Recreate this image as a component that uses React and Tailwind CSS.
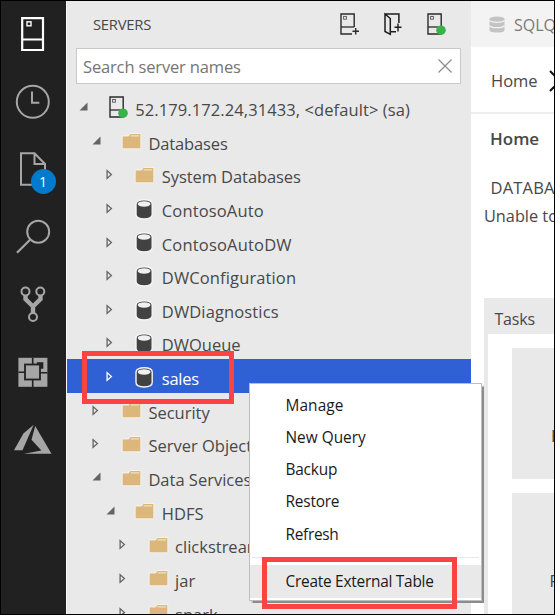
import React from "react";

const Svg = ({ w, h, className = "", children }) => (
  <svg width={w} height={h} viewBox={`0 0 ${w} ${h}`} fill="none" className={"block shrink-0 overflow-visible " + className}>{children}</svg>
);

function Twisty({ open, selected }) {
  return (
    <Svg w={10} h={12}>
      {open ? (
        <path d="M8.5 0.5V8.5H0.5Z" fill="#646464" />
      ) : (
        <path d="M1.1 1.6V9.4L5.4 5.5Z" stroke={selected ? "#fff" : "#646464"} strokeWidth="1.3" />
      )}
    </Svg>
  );
}

function Folder() {
  return (
    <Svg w={20} h={17}>
      <path d="M0.2 2.9H6.3L8.3 0.5H18.8V15.8H0.2Z" stroke="#f6f3ee" strokeWidth="1" />
      <path d="M0.7 3.4H6.5L8.5 1H18.3V15.3H0.7Z" fill="#dcb67a" />
      <path d="M8.6 2.9H17.2" stroke="#f6ead6" strokeWidth="1" />
    </Svg>
  );
}

function Cylinder() {
  return (
    <Svg w={20} h={21}>
      <path d="M1 5C1 2.2 4.6 0.8 9.1 0.8S17.2 2.2 17.2 5V15.6C17.2 18.6 13.6 20 9.1 20S1 18.6 1 15.6Z" fill="#424242" stroke="#f6f6f6" strokeWidth="1.4" />
      <ellipse cx="9.1" cy="5" rx="6.4" ry="2.7" fill="#f0eff1" />
    </Svg>
  );
}

function ServerBox({ dot, plus }) {
  return (
    <Svg w={20} h={23}>
      <path d={plus ? "M14.2 14V1H1V21H12" : "M1 1H14.2V21H1Z"} stroke="#2b2b2b" strokeWidth="1.4" />
      <path d="M1 14H14.2" stroke="#2b2b2b" strokeWidth="1.3" />
      <rect x="3.6" y="3.4" width="2.8" height="2.8" stroke="#555" strokeWidth="0.9" />
      {dot && <circle cx="14" cy="17.2" r="4.8" fill="#37b34a" />}
      {plus && <path d="M12.5 18.2H19M15.7 15V21.5" stroke="#2b2b2b" strokeWidth="1.4" />}
    </Svg>
  );
}

const rows = [
  { d: 0, k: "server", open: true, t: "52.179.172.24,31433, <default> (sa)", c: "tracking-[0.09px]" },
  { d: 1, k: "folder", open: true, t: "Databases", c: "tracking-[-0.12px]" },
  { d: 2, k: "folder", t: "System Databases", c: "tracking-[-0.08px]" },
  { d: 2, k: "db", t: "ContosoAuto", c: "tracking-[0.15px]" },
  { d: 2, k: "db", t: "ContosoAutoDW", c: "tracking-[0.18px]" },
  { d: 2, k: "db", t: "DWConfiguration", c: "tracking-[0.13px]" },
  { d: 2, k: "db", t: "DWDiagnostics", c: "tracking-[0.13px]" },
  { d: 2, k: "db", t: "DWQueue", c: "" },
  { d: 2, k: "db", t: "sales", c: "tracking-[-0.25px]", selected: true },
  { d: 1, k: "folder", t: "Security", c: "" },
  { d: 1, k: "folder", t: "Server Objects", c: "" },
  { d: 1, k: "folder", open: true, t: "Data Services", c: "" },
  { d: 2, k: "folder", open: true, t: "HDFS", c: "" },
  { d: 3, k: "folder", t: "clickstream", c: "" },
  { d: 3, k: "folder", t: "jar", c: "" },
  { d: 3, k: "folder", t: "spark", c: "" },
];
const indent = ["pl-[12px]", "pl-[25.4px]", "pl-[38.8px]", "pl-[52.1px]"];

function Row({ r }) {
  return (
    <div className={"flex h-[33.65px] shrink-0 items-start " + indent[r.d] + (r.selected ? " bg-[#2f61d5] text-white" : "")}>
      <span className="w-[29.7px] pt-[11.7px]"><Twisty open={r.open} selected={r.selected} /></span>
      <span className={r.k === "server" ? "w-[26.6px] pt-[6.2px]" : r.k === "db" ? "w-[26.3px] pt-[7.5px]" : "w-[26.3px] pt-[9.2px]"}>
        {r.k === "server" ? <ServerBox dot /> : r.k === "db" ? <Cylinder /> : <Folder />}
      </span>
      <span className={"pt-[7.7px] text-[16.5px] leading-6 whitespace-pre " + r.c}>{r.t}</span>
    </div>
  );
}

function ActivityBar() {
  const g = "#a6a6a6";
  return (
    <nav className="flex w-[65px] shrink-0 flex-col items-center bg-[#212121] pt-4 pr-[1.8px]">
      <Svg w={40} h={36}>
        <path d="M9.2 1.2H30V33H9.2ZM9.2 22.5H30" stroke="#fff" strokeWidth="2.2" />
        <rect x="14" y="4.8" width="4" height="4" stroke="#fff" strokeWidth="1.4" />
      </Svg>
      <Svg w={40} h={36} className="mt-8">
        <circle cx="19.8" cy="16.8" r="16" stroke={g} strokeWidth="2" />
        <path d="M19 6.5V17.7H26.3" stroke={g} strokeWidth="2" />
      </Svg>
      <div className="relative mt-8">
        <Svg w={40} h={36}>
          <path d="M8 0.2H21.5L32 11V31.7H8ZM21.5 0.2V11H32" stroke={g} strokeWidth="2" />
        </Svg>
        <span className="absolute top-[15.5px] left-[18px] flex h-[25px] w-[25px] items-center justify-center rounded-full bg-[#007acc] text-[14px] text-white">1</span>
      </div>
      <Svg w={40} h={36} className="mt-[27.5px]">
        <circle cx="25.2" cy="14.7" r="11" stroke={g} strokeWidth="2" />
        <path d="M17.3 22.5L4 35.7" stroke={g} strokeWidth="2.2" />
      </Svg>
      <Svg w={40} h={38} className="mt-8">
        <path d="M12.5 9V14L20 21.5L27.5 14V9M20 21V29" stroke={g} strokeWidth="4.4" />
        <circle cx="12.5" cy="6.5" r="4" stroke={g} strokeWidth="2" fill="#212121" />
        <circle cx="27.3" cy="6.5" r="4" stroke={g} strokeWidth="2" fill="#212121" />
        <circle cx="20" cy="32" r="4" stroke={g} strokeWidth="2" fill="#212121" />
      </Svg>
      <Svg w={40} h={36} className="mt-8">
        <rect x="5.4" y="2.8" width="29" height="29" fill={g} />
        <rect x="12" y="9.5" width="15" height="15" fill={g} stroke="#212121" strokeWidth="1.8" />
        <path d="M19.7 2.8V9.5M27 17.8H34.5M19.7 24.8V32M5.4 17.3H12" stroke="#212121" strokeWidth="1.6" />
        <path d="M23.8 7.2H30.3V13.8H27.5V9.5H23.8Z" fill="#212121" />
      </Svg>
      <Svg w={40} h={36} className="mt-8">
        <path d="M20.7 1.7L10.4 10.5L1 27.2H9.5Z" fill={g} />
        <path d="M22.2 3L38.5 30.8H11L28.4 27.5L18.5 16.7Z" fill={g} />
      </Svg>
    </nav>
  );
}

function Sidebar() {
  return (
    <aside className="flex w-[405px] shrink-0 flex-col overflow-hidden border-l border-[#f8f8f8] bg-[#e9e9e9]">
      <header className="flex h-[47px] shrink-0 items-center pr-[24px] pl-[26px]">
        <h2 className="grow text-[14.8px] tracking-[-0.25px]">SERVERS</h2>
        <div className="flex gap-[23.5px]">
          <ServerBox plus />
          <Svg w={20} h={23}>
            <path d="M1 1H14.9V10M1 1L6.3 5.5V21.3L1 18.5ZM6.3 18.7H12" stroke="#1c1c1c" strokeWidth="1.5" />
            <path d="M14 10.5V18.5M10.5 14.3H17.5" stroke="#1c1c1c" strokeWidth="1.4" />
          </Svg>
          <ServerBox dot />
        </div>
      </header>
      <div className="ml-[9px] flex h-9 w-[385px] shrink-0 items-center border border-[#c9c9c9] bg-white pr-2 pl-[6px]">
        <span className="grow pt-[3px] text-[16.5px] tracking-[-0.15px] text-[#757575]">Search server names</span>
        <Svg w={14} h={14}><path d="M0.5 0.5L13.5 13.5M13.5 0.5L0.5 13.5" stroke="#8c8c8c" strokeWidth="1.2" /></Svg>
      </div>
      <div className="flex flex-col pt-[6.3px]">
        {rows.map((r) => <Row key={r.t} r={r} />)}
      </div>
    </aside>
  );
}

function Dashboard() {
  return (
    <main className="flex w-[83px] shrink-0 flex-col overflow-hidden bg-white whitespace-nowrap">
      <div className="flex h-[46px] shrink-0 items-center gap-[9px] bg-[#f3f3f3] pl-[18px] text-[16px] text-[#7a7a7a]">
        <Svg w={16} h={17}>
          <path d="M0.5 3V14.2C0.5 17.4 15.5 17.4 15.5 14.2V3Z" fill="#c3c3c3" />
          <ellipse cx="8" cy="3" rx="7.5" ry="2.6" fill="#c3c3c3" />
          <path d="M0.5 4.3C2 7 14 7 15.5 4.3M0.5 9.6C2 12.4 14 12.4 15.5 9.6" stroke="#f3f3f3" strokeWidth="1.2" />
        </Svg>
        <span className="pt-px">SQLQuery</span>
      </div>
      <div className="flex h-[67px] shrink-0 items-center gap-[11px] border-b-2 border-[#eee] pt-[3px] pl-5 text-[16.5px]">
        <span className="pt-px">Home</span>
        <Svg w={12} h={20}><path d="M1 0L11 10L1 20" stroke="#111" strokeWidth="2" /></Svg>
      </div>
      <div className="pt-[13px] pl-[19px] text-[17px] leading-6 font-semibold">Home</div>
      <div className="mt-[25px] pl-[19.5px] text-[16.5px] leading-6 tracking-[0.2px]">DATABASE</div>
      <div className="mt-1 pl-[13px] text-[16.3px] leading-6">Unable to load</div>
      <section className="mt-[70px] ml-[13px] flex grow flex-col border-l-4 border-[#e9e9e9]">
        <h3 className="flex h-9 shrink-0 items-center bg-[#e9e9e9] pt-[6px] pl-[6.5px] text-[16px] tracking-[-0.2px]">Tasks</h3>
        <div className="mt-[14px] ml-6 flex h-[131px] shrink-0 items-center bg-[#e9e9e9] pt-[45px] pl-[39px] text-[16px]">Backup</div>
        <div className="mt-[14px] ml-6 flex h-[131px] shrink-0 items-center bg-[#e9e9e9] pt-[45px] pl-[37.5px] text-[16px]">Restore</div>
      </section>
    </main>
  );
}

const menu = [
  ["Manage", "tracking-[0.1px]"],
  ["New Query", ""],
  ["Backup", "tracking-[-0.2px]"],
  ["Restore", "tracking-[-0.2px]"],
  ["Refresh", "tracking-[-0.3px]"],
];

function ContextMenu() {
  return (
    <div className="absolute top-[382px] left-[248px] flex h-[218px] w-[233px] flex-col border border-[#bdbdbd] bg-white pt-[5px] text-[15.4px] text-[#1a1a1a] shadow-[1.5px_1.5px_1px_#8c8c8c]">
      {menu.map(([t, c]) => (
        <div key={t} className={"flex h-[32.3px] shrink-0 items-center pl-[35.5px] " + c}>{t}</div>
      ))}
      <div className="mx-[2px] mt-[6.5px] h-px shrink-0 bg-[#e8e8e8]" />
      <div className="mt-[7px] flex h-[33px] shrink-0 items-center bg-[#e9e9e9] pl-[35.5px] tracking-[-0.24px]">Create External Table</div>
    </div>
  );
}

export default function App() {
  return (
    <div className="relative flex h-[615px] w-[555px] overflow-hidden border border-black bg-white font-['Open_Sans','Noto_Sans',sans-serif] text-[#484848]">
      <ActivityBar />
      <Sidebar />
      <Dashboard />
      <ContextMenu />
      <div className="absolute top-[350px] left-[81px] h-[53px] w-[152px] border-5 border-[#fb4343]" />
      <div className="absolute top-[556px] left-[261px] h-[52px] w-[195px] border-5 border-[#fb4343]" />
    </div>
  );
}
